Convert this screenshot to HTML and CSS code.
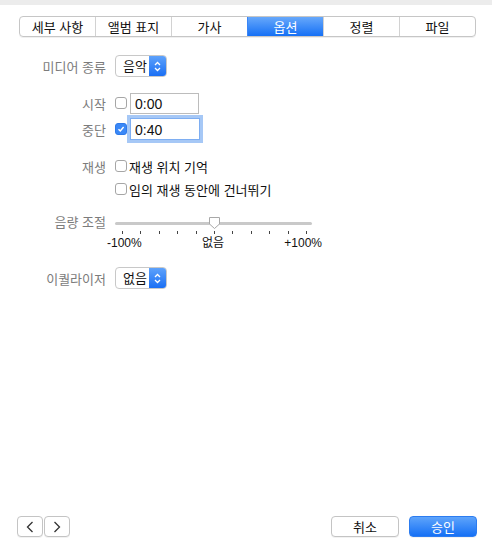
FILE: index.html
```html
<!DOCTYPE html>
<html lang="ko">
<head>
  <meta charset="UTF-8" />
  <meta name="viewport" content="width=device-width, initial-scale=1.0" />
  <title>옵션</title>
  <link rel="stylesheet" href="styles.css">
</head>
<body>
  <div class="titlebar"></div>

  <nav class="tabs">
    <a>세부 사항</a>
    <a>앨범 표지</a>
    <a>가사</a>
    <a class="active">옵션</a>
    <a>정렬</a>
    <a>파일</a>
  </nav>

  <div class="form">
    <div class="row media">
      <span class="label">미디어 종류</span>
      <div class="popup"><span class="value">음악</span><span class="arrows"><svg width="9" height="13" viewBox="0 0 9 13"><path d="M2 5 L4.5 2.5 L7 5 M2 8 L4.5 10.5 L7 8" fill="none" stroke="#fff" stroke-width="1.3"/></svg></span></div>
    </div>

    <div class="row start">
      <span class="label">시작</span>
      <span class="check"></span>
      <input class="field" type="text" value="0:00">
    </div>
    <div class="row stop">
      <span class="label">중단</span>
      <span class="check on"><svg width="10" height="10" viewBox="0 0 10 10"><path d="M2.5 5.2 L4.3 7 L7.6 3" fill="none" stroke="#fff" stroke-width="1.4"/></svg></span>
      <input class="field focus" type="text" value="0:40">
    </div>

    <div class="row play">
      <span class="label">재생</span>
      <span class="check"></span>
      <span class="opt">재생 위치 기억</span>
    </div>
    <div class="row play2">
      <span class="label"></span>
      <span class="check"></span>
      <span class="opt">임의 재생 동안에 건너뛰기</span>
    </div>

    <div class="row volume">
      <span class="label">음량 조절</span>
      <div class="slider">
        <div class="track">
          <svg class="thumb" width="13" height="14" viewBox="0 0 13 14"><path d="M1.5 1.5 H11.5 V8 L6.5 12.5 L1.5 8 Z" fill="#fff" stroke="#a8a8a8" stroke-width="1" stroke-linejoin="round"/></svg>
        </div>
        <div class="ticks">
          <i></i><i></i><i></i><i></i><i></i><i></i><i></i><i></i><i></i><i></i><i></i>
        </div>
        <div class="tick-labels">
          <span>-100%</span><span>없음</span><span>+100%</span>
        </div>
      </div>
    </div>

    <div class="row eq">
      <span class="label">이퀄라이저</span>
      <div class="popup"><span class="value">없음</span><span class="arrows"><svg width="9" height="13" viewBox="0 0 9 13"><path d="M2 5 L4.5 2.5 L7 5 M2 8 L4.5 10.5 L7 8" fill="none" stroke="#fff" stroke-width="1.3"/></svg></span></div>
    </div>
  </div>

  <footer>
    <div class="nav-buttons">
      <button class="btn nav"><svg width="8" height="12" viewBox="0 0 8 12"><path d="M6.5 1 L1.5 6 L6.5 11" fill="none" stroke="#333" stroke-width="1.3"/></svg></button>
      <button class="btn nav"><svg width="8" height="12" viewBox="0 0 8 12"><path d="M1.5 1 L6.5 6 L1.5 11" fill="none" stroke="#333" stroke-width="1.3"/></svg></button>
    </div>
    <div class="actions">
      <button class="btn">취소</button>
      <button class="btn primary">승인</button>
    </div>
  </footer>
</body>
</html>
```

FILE: styles.css
```css
* { margin: 0; padding: 0; box-sizing: border-box; }
html, body { height: 100%; }
body {
  font-family: "Noto Sans CJK KR", "Liberation Sans", sans-serif;
  font-size: 13px;
  color: #1d1d1d;
  background: #fff;
  display: flex;
  flex-direction: column;
}
.titlebar { height: 5px; background: #ececec; }

/* Tabs */
.tabs {
  display: flex; margin: 11px 0 0 19px; width: 457px; height: 21px;
  border: 1px solid #c6c6c6; border-radius: 4px; overflow: hidden;
  box-shadow: 0 1px 0 rgba(0,0,0,0.06);
}
.tabs a {
  flex: 1; display: flex; align-items: center; justify-content: center;
  border-left: 1px solid #d2d2d2; line-height: 1; color: #111;
}
.tabs a:first-child { border-left: none; }
.tabs a.active {
  background: linear-gradient(#67a8fb, #1570f5); color: #fff; border-left-color: #3b86f6;
}

/* Form */
.form { padding-left: 18px; margin-top: 18px; }
.row { display: flex; align-items: center; }
.label { width: 88px; margin-right: 9px; text-align: right; color: #7c7c7c; flex-shrink: 0; }
.media { height: 22px; }
.start { height: 22px; margin-top: 15px; }
.stop { height: 22px; margin-top: 4px; }
.play { height: 20px; margin-top: 16px; }
.play2 { height: 20px; margin-top: 3px; }
.play2 .check, .play .check { margin-right: 2px; }
.volume { align-items: flex-start; margin-top: 14px; }
.volume .label { line-height: 18px; }
.eq { height: 22px; margin-top: 17px; }

.popup {
  display: flex; height: 22px; width: 52px; border-radius: 4px; overflow: hidden;
  border: 1px solid #c8c8c8; background: #fff;
}
.popup .value { flex: 1; padding-left: 7px; line-height: 20px; color: #111; }
.popup .arrows {
  width: 17px; display: flex; align-items: center; justify-content: center;
  background: linear-gradient(#5ea2fb, #1a6ff4);
}

.check {
  width: 12px; height: 12px; border: 1px solid #a6a6a6; border-radius: 3px;
  background: #fff; margin-right: 3px; flex-shrink: 0;
  display: flex; align-items: center; justify-content: center;
}
.check.on { background: #3a88f7; border-color: #2e7ae9; }

.field {
  width: 70px; height: 22px; border: 1px solid #bcbcbc; outline: none;
  font-family: "Liberation Sans", sans-serif; font-size: 14px; color: #111;
  padding: 1px 0 0 4px;
}
.start .field { height: 21px; width: 69px; }
.field.focus { border-color: #7eaef2; box-shadow: 0 0 0 3px #a6c8f6; }

.opt { color: #111; }

/* Volume slider */
.slider { width: 215px; margin-left: -8px; position: relative; }
.track {
  height: 3px; margin: 9px 10px 0 8px; background: #c9c9c9; border-radius: 2px;
  position: relative;
}
.thumb { position: absolute; left: 93px; top: -6px; }
.ticks { display: flex; justify-content: space-between; margin: 6px 15px 0 15px; height: 4px; }
.ticks i { width: 1px; height: 3px; background: #444; }
.tick-labels {
  display: flex; justify-content: space-between; margin-top: 1px; line-height: 14px;
  color: #111; font-family: "Liberation Sans", "Noto Sans CJK KR", sans-serif; font-size: 12px;
}

/* Footer */
footer {
  margin-top: auto; display: flex; justify-content: space-between;
  padding: 0 15px 19px 17px;
}
.nav-buttons { display: flex; gap: 1px; }
.actions { display: flex; gap: 10px; }
.btn {
  height: 21px; width: 68px; border: 1px solid #c4c4c4; border-radius: 4px; background: #fff;
  font-family: inherit; font-size: 13px; color: #111;
  display: flex; align-items: center; justify-content: center;
  box-shadow: 0 1px 0 rgba(0,0,0,0.05);
}
.btn.nav { width: 26px; }
.btn.primary {
  background: linear-gradient(#5ea4fb, #1570f5); border-color: #2c7cf0; color: #fff;
}
```
